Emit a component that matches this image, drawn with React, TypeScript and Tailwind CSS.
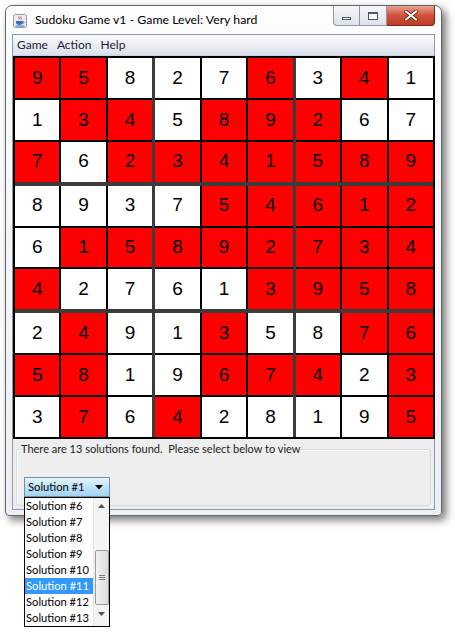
const grid: [number, boolean][][] = [
  [[9, true], [5, true], [8, false], [2, false], [7, false], [6, true], [3, false], [4, true], [1, false]],
  [[1, false], [3, true], [4, true], [5, false], [8, true], [9, true], [2, true], [6, false], [7, false]],
  [[7, true], [6, false], [2, true], [3, true], [4, true], [1, true], [5, true], [8, true], [9, true]],
  [[8, false], [9, false], [3, false], [7, false], [5, true], [4, true], [6, true], [1, true], [2, true]],
  [[6, false], [1, true], [5, true], [8, true], [9, true], [2, true], [7, true], [3, true], [4, true]],
  [[4, true], [2, false], [7, false], [6, false], [1, false], [3, true], [9, true], [5, true], [8, true]],
  [[2, false], [4, true], [9, false], [1, false], [3, true], [5, false], [8, false], [7, true], [6, true]],
  [[5, true], [8, true], [1, false], [9, false], [6, true], [7, true], [4, true], [2, false], [3, true]],
  [[3, false], [7, true], [6, false], [4, true], [2, false], [8, false], [1, false], [9, false], [5, true]],
]

const solutions = [6, 7, 8, 9, 10, 11, 12, 13]

function JavaIcon() {
  return (
    <svg width="14" height="14" viewBox="0 0 14 14">
      <rect x="0.5" y="0.5" width="13" height="13" rx="2" fill="#e9edf3" stroke="#8a9ab0" />
      <path d="M6 2.5c-1 1.2 1 1.8 0 3M8 2.5c-1 1.2 1 1.8 0 3" stroke="#d0362a" strokeWidth="0.9" fill="none" />
      <path d="M3 7h7v1.5c0 1.6-1.4 2.5-3.5 2.5S3 10.1 3 8.5z" fill="#3b6fb6" />
      <path d="M10 7.5c1.5 0 1.5 2-0.2 2" stroke="#3b6fb6" strokeWidth="0.9" fill="none" />
      <rect x="2.5" y="11.5" width="9" height="1" fill="#3b6fb6" />
    </svg>
  )
}

function TitleButtons() {
  return (
    <div className="flex self-start">
      <div className="w-[27px] h-[20px] flex items-center justify-center border border-[#8d97a6] border-t-0 rounded-bl-[4px] bg-gradient-to-b from-[#f6f7f9] to-[#dde2ea]">
        <div className="w-[9px] h-[3px] border border-[#4c5566] bg-white mt-[5px]" />
      </div>
      <div className="w-[27px] h-[20px] flex items-center justify-center border border-l-0 border-[#8d97a6] border-t-0 bg-gradient-to-b from-[#f6f7f9] to-[#dde2ea]">
        <div className="w-[10px] h-[8px] border border-[#4c5566] border-t-2 bg-white" />
      </div>
      <div className="w-[48px] h-[20px] flex items-center justify-center border border-l-0 border-[#7a2a1c] border-t-0 rounded-br-[4px] bg-gradient-to-b from-[#e8a190] via-[#d0513a] to-[#c03a22]">
        <svg width="14" height="11" viewBox="0 0 14 11">
          <path d="M2 1.5l10 8M12 1.5l-10 8" stroke="#5b2418" strokeWidth="3.6" strokeLinecap="round" />
          <path d="M2 1.5l10 8M12 1.5l-10 8" stroke="#ffffff" strokeWidth="2.2" strokeLinecap="round" />
        </svg>
      </div>
    </div>
  )
}

function Board() {
  const blocks = [0, 1, 2, 3, 4, 5, 6, 7, 8]
  return (
    <div className="grid grid-cols-3 grid-rows-3 gap-x-[3px] gap-y-[4px] bg-[#3c3c3c] border-2 border-black w-[422px] h-[383px]">
      {blocks.map((b) => {
        const br = Math.floor(b / 3) * 3
        const bc = (b % 3) * 3
        return (
          <div key={b} className="grid grid-cols-3 grid-rows-3 gap-[2px] bg-black">
            {[0, 1, 2].flatMap((r) =>
              [0, 1, 2].map((c) => {
                const [n, red] = grid[br + r][bc + c]
                return (
                  <div
                    key={r * 3 + c}
                    className={`flex items-center justify-center text-[19px] text-black font-['Liberation_Sans',Arial,sans-serif] ${red ? 'bg-[#ff0000]' : 'bg-white'}`}
                  >
                    {n}
                  </div>
                )
              })
            )}
          </div>
        )
      })}
    </div>
  )
}

export default function App() {
  return (
    <div className="w-[455px] h-[635px] bg-white pt-[5px] pl-[5px] font-['Lato',sans-serif]">
      <div className="w-[437px] h-[511px] rounded-t-[7px] rounded-b-[4px] border border-[#5e6470] bg-gradient-to-b from-[#fdfdfe] to-[#eceff3] shadow-[4px_4px_9px_rgba(0,0,0,0.55)] flex flex-col px-[6px]">
        {/* title bar */}
        <div className="h-[28px] flex items-center">
          <div className="pl-[1px] pt-[1px]">
            <JavaIcon />
          </div>
          <span className="ml-[8px] text-[12.3px] text-black whitespace-nowrap">Sudoku Game v1 - Game Level: Very hard</span>
          <div className="ml-auto self-start">
            <TitleButtons />
          </div>
        </div>

        {/* client */}
        <div className="border border-[#8e99a8] bg-[#eeeeee] flex flex-col">
          <div className="h-[21px] flex items-center gap-[9px] pl-[4px] text-[12px] text-[#1e1b3a] bg-gradient-to-b from-[#fafbfd] to-[#dae1ec] border-b border-[#c7d0dd]">
            <span>Game</span>
            <span>Action</span>
            <span>Help</span>
          </div>
          <Board />
          <div className="h-[70px] px-[3px] pt-[10px] pb-[3px]">
            <div className="relative h-full border border-[#d3dbe2] rounded-[3px] shadow-[inset_1px_1px_0_#ffffff]">
              <span className="absolute -top-[9px] left-[4px] bg-[#eeeeee] text-[11px] text-[#222] leading-[16px] pr-[1px] whitespace-nowrap">
                There are 13 solutions found.&nbsp; Please select below to view
              </span>
              <div className="absolute left-[7px] top-[27px]">
                <div className="w-[86px] h-[20px] border border-[#6f8fae] bg-gradient-to-b from-[#e6f4fc] via-[#bfe3f7] to-[#a2d3f0] flex items-center pl-[3px] text-[11.2px] text-black whitespace-nowrap">
                  <span>Solution #1</span>
                  <svg className="ml-auto mr-[6px]" width="8" height="5" viewBox="0 0 8 5">
                    <path d="M0 0h8L4 4.5z" fill="#000" />
                  </svg>
                </div>
                <div className="absolute left-0 top-[20px] z-10 w-[86px] h-[130px] border border-black bg-white flex">
                  <div className="flex-1 flex flex-col overflow-hidden">
                    {solutions.map((s) => (
                      <div
                        key={s}
                        className={`h-[16px] leading-[16px] pl-[1px] text-[11.2px] whitespace-nowrap ${s === 11 ? 'bg-[#3399ff] text-white' : 'text-black'}`}
                      >
                        Solution #{s}
                      </div>
                    ))}
                  </div>
                  <div className="w-[16px] bg-[#f3f3f3] border-l border-[#e6e6e6] flex flex-col items-center">
                    <svg className="mt-[6px]" width="7" height="4" viewBox="0 0 7 4">
                      <path d="M0 4h7L3.5 0z" fill="#555" />
                    </svg>
                    <div className="mt-[42px] w-[14px] h-[55px] rounded-[2px] border border-[#9a9a9a] bg-gradient-to-r from-[#f3f3f3] to-[#dcdcdc] flex items-center justify-center">
                      <div className="flex flex-col gap-[1px]">
                        <div className="w-[6px] h-[1px] bg-[#777]" />
                        <div className="w-[6px] h-[1px] bg-[#777]" />
                        <div className="w-[6px] h-[1px] bg-[#777]" />
                      </div>
                    </div>
                    <svg className="mt-[7px]" width="7" height="4" viewBox="0 0 7 4">
                      <path d="M0 0h7L3.5 4z" fill="#555" />
                    </svg>
                  </div>
                </div>
              </div>
            </div>
          </div>
        </div>
      </div>
    </div>
  )
}
